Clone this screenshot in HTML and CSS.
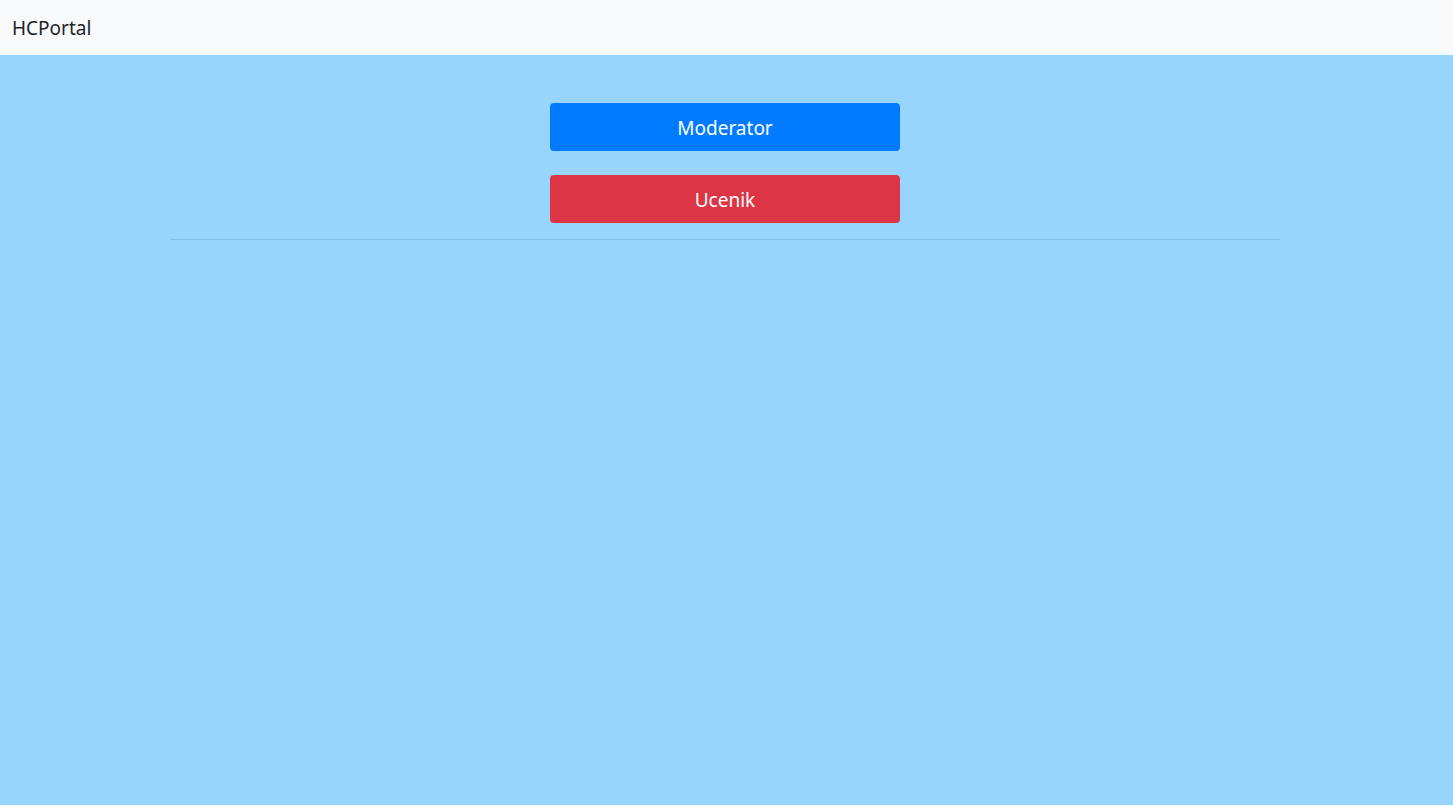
FILE: index.html
```html
<!DOCTYPE html>
<html lang="en">
<head>
<meta charset="utf-8">
<title>HCPortal</title>
<link rel="stylesheet" href="styles.css">
</head>
<body>
<nav class="navbar">
  <a class="brand" href="#">HCPortal</a>
</nav>
<main class="container">
  <div class="actions">
    <button class="btn btn-primary">Moderator</button>
    <button class="btn btn-danger">Ucenik</button>
  </div>
  <hr class="divider">
</main>
</body>
</html>
```

FILE: styles.css
```css
html, body {
  margin: 0;
  padding: 0;
  height: 100%;
}
body {
  background: #97d5fc;
  font-family: "Noto Sans", "Open Sans", "Liberation Sans", sans-serif;
  color: #212529;
}
.navbar {
  background: #f8f9fa;
  height: 55px;
  display: flex;
  align-items: center;
  padding: 0 12px;
  box-sizing: border-box;
}
.brand {
  font-size: 19px;
  color: #212529;
  text-decoration: none;
  margin-top: 1px;
}
.container {
  width: 1110px;
  margin: 0 0 0 calc(50% - 556.5px);
  padding-top: 48px;
}
.actions {
  display: flex;
  flex-direction: column;
  align-items: center;
  gap: 24px;
}
.btn {
  width: 350px;
  height: 48px;
  padding: 2px 0 0;
  border: none;
  border-radius: 4px;
  color: #fff;
  font-family: inherit;
  font-size: 19px;
  cursor: pointer;
}
.btn-primary { background: #007bff; }
.btn-danger { background: #dc3545; }
.divider {
  margin: 16px 0 0;
  border: 0;
  border-top: 1px solid rgba(0, 0, 0, 0.1);
}
```
